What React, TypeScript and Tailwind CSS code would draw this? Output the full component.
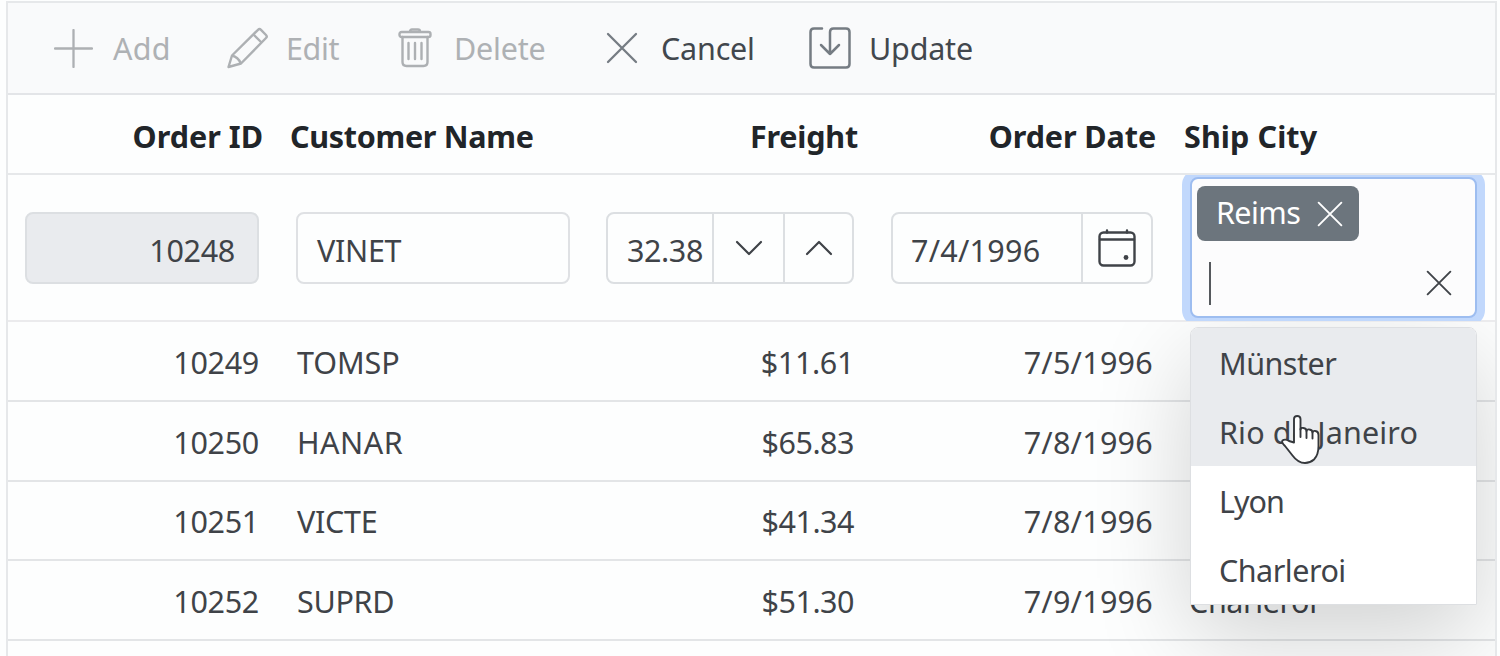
import type { ReactNode } from 'react';

const orders = [
  { id: '10249', name: 'TOMSP', freight: '$11.61', date: '7/5/1996', city: '', nameTracking: 'tracking-[-0.1px]', freightTracking: 'tracking-[-0.35px]' },
  { id: '10250', name: 'HANAR', freight: '$65.83', date: '7/8/1996', city: '', nameTracking: 'tracking-[0.5px]', freightTracking: 'tracking-[-0.5px]' },
  { id: '10251', name: 'VICTE', freight: '$41.34', date: '7/8/1996', city: '', nameTracking: 'tracking-[-0.3px]', freightTracking: 'tracking-[-0.5px]' },
  { id: '10252', name: 'SUPRD', freight: '$51.30', date: '7/9/1996', city: 'Charleroi', nameTracking: 'tracking-[-0.3px]', freightTracking: 'tracking-[-0.5px]' },
];

const cities = [
  { name: 'Münster', active: true, tracking: 'tracking-[-0.5px]' },
  { name: 'Rio de Janeiro', active: true, tracking: 'tracking-[0.15px]' },
  { name: 'Lyon', active: false, tracking: 'tracking-[-1px]' },
  { name: 'Charleroi', active: false, tracking: 'tracking-[-0.5px]' },
];

const grid = 'grid grid-cols-[270px_311px_284px_299px_324px]';

function Cross({ size }: { size: number }) {
  return (
    <svg width={size} height={size} viewBox="0 0 32 32" fill="none" stroke="currentColor" strokeWidth="2.3" strokeLinecap="round">
      <path d="M2 2 30 30M30 2 2 30" />
    </svg>
  );
}

function Tool({ label, muted, className, children }: { label: string; muted?: boolean; className: string; children: ReactNode }) {
  return (
    <button className={`flex shrink-0 items-center ${className}`}>
      <span className={muted ? 'text-[#adb0b3]' : 'text-[#757c83]'}>{children}</span>
      <span className={muted ? 'text-[#aeb1b4]' : 'text-[#42474d]'}>{label}</span>
    </button>
  );
}

export default function App() {
  return (
    <div className="h-[656px] w-[1500px] overflow-hidden bg-[#fdfefe] pl-[6px] pt-px font-['Noto_Sans',sans-serif] text-[30.5px] leading-[40px] text-[#3f4348]">
      <div className="relative h-[700px] w-[1491px] border-2 border-[#e6e8ea]">
        <div className="flex h-[92px] items-center border-b-2 border-[#e3e5e8] bg-[#f9fafb] pl-[46px]">
          <Tool label="Add" muted className="w-[173px] gap-[20px] tracking-[0.2px]">
            <svg width="39" height="39" viewBox="0 0 39 39" fill="none" stroke="currentColor" strokeWidth="2.3" strokeLinecap="round">
              <path d="M19.5 1v37M1 19.5h37" />
            </svg>
          </Tool>
          <Tool label="Edit" muted className="w-[171px] gap-[17px] tracking-[-0.4px]">
            <svg width="42" height="42" viewBox="0 0 42 42" fill="none" stroke="currentColor" strokeWidth="2.4" strokeLinejoin="round">
              <path d="M1.5 40 5 28.5 31 2.8Q32.5 1.3 34 2.8L39 8Q40.5 9.5 39 11L14 36.5Z" />
              <path d="M5 28.5Q11 30 14 36.5M26.5 7.5l8 8" />
            </svg>
          </Tool>
          <Tool label="Delete" muted className="w-[208px] gap-[22px] tracking-[-0.2px]">
            <svg width="34" height="40" viewBox="0 0 34 40" fill="none" stroke="currentColor" strokeWidth="2.4" strokeLinecap="round" strokeLinejoin="round">
              <rect x="1.5" y="4" width="31" height="5" rx="2" />
              <path d="M12 3.5q0-2 2-2h6q2 0 2 2M4.5 9v25q0 4 4 4h17q4 0 4-4V9M10.5 15v16M17 15v16M23.5 15v16" />
            </svg>
          </Tool>
          <Tool label="Cancel" className="w-[203px] gap-[23px] tracking-[-0.2px]">
            <Cross size={32} />
          </Tool>
          <Tool label="Update" className="gap-[18px] tracking-[-0.2px]">
            <svg width="42" height="42" viewBox="0 0 42 42" fill="none" stroke="currentColor" strokeWidth="2.5" strokeLinecap="round" strokeLinejoin="round">
              <path d="M13 1.5H5Q1.5 1.5 1.5 5V37Q1.5 40.5 5 40.5H37Q40.5 40.5 40.5 37V5Q40.5 1.5 37 1.5H24.5Q21 1.5 21 5V27M12 18L21 27L30 18" />
            </svg>
          </Tool>
        </div>

        <div className={`${grid} h-[79.5px] items-center border-b-2 border-[#e6e8ea] pt-[4px] text-[30.5px] font-bold text-[#212529]`}>
          <div className="pr-[15px] text-right">Order ID</div>
          <div className="pl-[12px] tracking-[-0.3px]">Customer Name</div>
          <div className="pr-[15px] text-right tracking-[-0.2px]">Freight</div>
          <div className="pr-[16px] text-right tracking-[-0.1px]">Order Date</div>
          <div className="pl-[12px] tracking-[0.1px]">Ship City</div>
        </div>

        <div className={`${grid} h-[147px] items-center border-b-2 border-[#ebebed]`}>
          <div className="pl-[17px]">
            <div className="h-[72px] w-[234px] rounded-[8px] border-2 border-[#dcdfe2] bg-[#e9ebee] pr-[22px] pt-[16px] text-right tracking-[-0.3px]">10248</div>
          </div>
          <div className="pl-[18px]">
            <div className="h-[72px] w-[274px] rounded-[8px] border-2 border-[#dfe1e4] pl-[19px] pt-[16px] tracking-[-0.3px]">VINET</div>
          </div>
          <div className="pl-[17px]">
            <div className="flex h-[72px] w-[248px] rounded-[8px] border-2 border-[#dcdfe2]">
              <div className="w-[104px] pl-[19px] pt-[16px] tracking-[-0.4px]">32.38</div>
              <div className="flex w-[71px] items-center justify-center border-l-2 border-[#dcdfe2]">
                <svg width="28" height="16" viewBox="0 0 28 16" fill="none" stroke="currentColor" strokeWidth="2.2" strokeLinecap="round" strokeLinejoin="round"><path d="m2 2 12 12L26 2" /></svg>
              </div>
              <div className="flex flex-1 items-center justify-center border-l-2 border-[#dcdfe2]">
                <svg width="28" height="16" viewBox="0 0 28 16" fill="none" stroke="currentColor" strokeWidth="2.2" strokeLinecap="round" strokeLinejoin="round"><path d="m2 14 12-12 12 12" /></svg>
              </div>
            </div>
          </div>
          <div className="pl-[18px]">
            <div className="flex h-[72px] w-[262px] rounded-[8px] border-2 border-[#dcdfe2]">
              <div className="w-[188px] pl-[18px] pt-[16px] tracking-[0.25px]">7/4/1996</div>
              <div className="flex flex-1 items-center justify-center border-l-2 border-[#dcdfe2]">
                <svg width="38" height="38" viewBox="0 0 38 38" fill="none" stroke="currentColor" strokeWidth="2.4" strokeLinecap="round">
                  <rect x="1.5" y="3.5" width="35" height="33" rx="4" />
                  <path d="M2 10.5h34M9 1.5v2M29 1.5v2" />
                  <circle cx="28" cy="28.5" r="2.4" fill="currentColor" stroke="none" />
                </svg>
              </div>
            </div>
          </div>
          <div className="flex h-[146px] items-center overflow-hidden pl-[18px]">
            <div className="flex h-[141px] w-[287px] flex-col rounded-[8px] border-2 border-[#9dbdf0] bg-[#fcfcfd] pl-[5px] pt-[7px] shadow-[0_0_0_8px_#c1d8fc]">
              <div className="flex h-[55px] w-[162px] items-center justify-between rounded-[8px] bg-[#6c757d] pl-[19px] pr-[16px] text-white">
                <span className="-mt-[3px] tracking-[-0.6px]">Reims</span>
                <Cross size={26} />
              </div>
              <div className="mt-[20px] flex h-[44px] items-center justify-between pl-[12px] pr-[23px]">
                <div className="h-[43px] w-[2px] bg-[#55595d]" />
                <Cross size={26} />
              </div>
            </div>
          </div>
        </div>

        <div className="pt-px">
          {orders.map((o) => (
            <div key={o.id} className={`${grid} h-[79.6px] items-center border-b-2 border-[#e3e5e7] pt-[2px]`}>
              <div className="pr-[19px] text-right tracking-[-0.3px]">{o.id}</div>
              <div className={`pl-[19px] ${o.nameTracking}`}>{o.name}</div>
              <div className={`pr-[19px] text-right ${o.freightTracking}`}>{o.freight}</div>
              <div className="pr-[19px] text-right tracking-[0.25px]">{o.date}</div>
              <div className="pl-[17px] tracking-[-0.4px]">{o.city}</div>
            </div>
          ))}
        </div>

        <div className="pointer-events-none absolute inset-x-0 bottom-0 top-[319px] overflow-hidden">
          <div className="absolute left-[1182px] top-[5px] h-[278px] w-[287px] rounded-t-[8px] shadow-[0_32px_96px_rgba(0,0,0,0.175)]" />
        </div>
        <div className="absolute left-[1182px] top-[324px] flex h-[278px] w-[287px] flex-col overflow-hidden rounded-t-[8px] border border-[#dddfe2] bg-white">
          {cities.map((c) => (
            <div key={c.name} className={`flex h-[69px] shrink-0 items-center pl-[28px] pt-px ${c.tracking} ${c.active ? 'bg-[#e9ebee]' : 'bg-white'}`}>{c.name}</div>
          ))}
        </div>
        <svg className="absolute left-[1272px] top-[411px]" width="42" height="52" viewBox="0 0 42 52" fill="#fff" stroke="#35383c" strokeWidth="1.9" strokeLinejoin="round" strokeLinecap="round">
          <path d="M14 28.5V5Q14 2 17.2 2T20.5 5V15.5Q21 13.5 23.5 14Q26.5 14.5 26.5 17Q27 15 29.5 15.5Q32.5 16 32.5 18.5Q33 16.5 35.5 17Q38.5 17.5 38.500 21V32Q38.500 41 34 45.500Q30 49 25 49Q18 49 12.500 41.500L5 32Q1 28 2.500 26.500Q5 24.500 9 27Z" />
          <path d="M20.500 15v8M26.500 17v7M32.500 18.500v6" fill="none" />
        </svg>
      </div>
    </div>
  );
}
